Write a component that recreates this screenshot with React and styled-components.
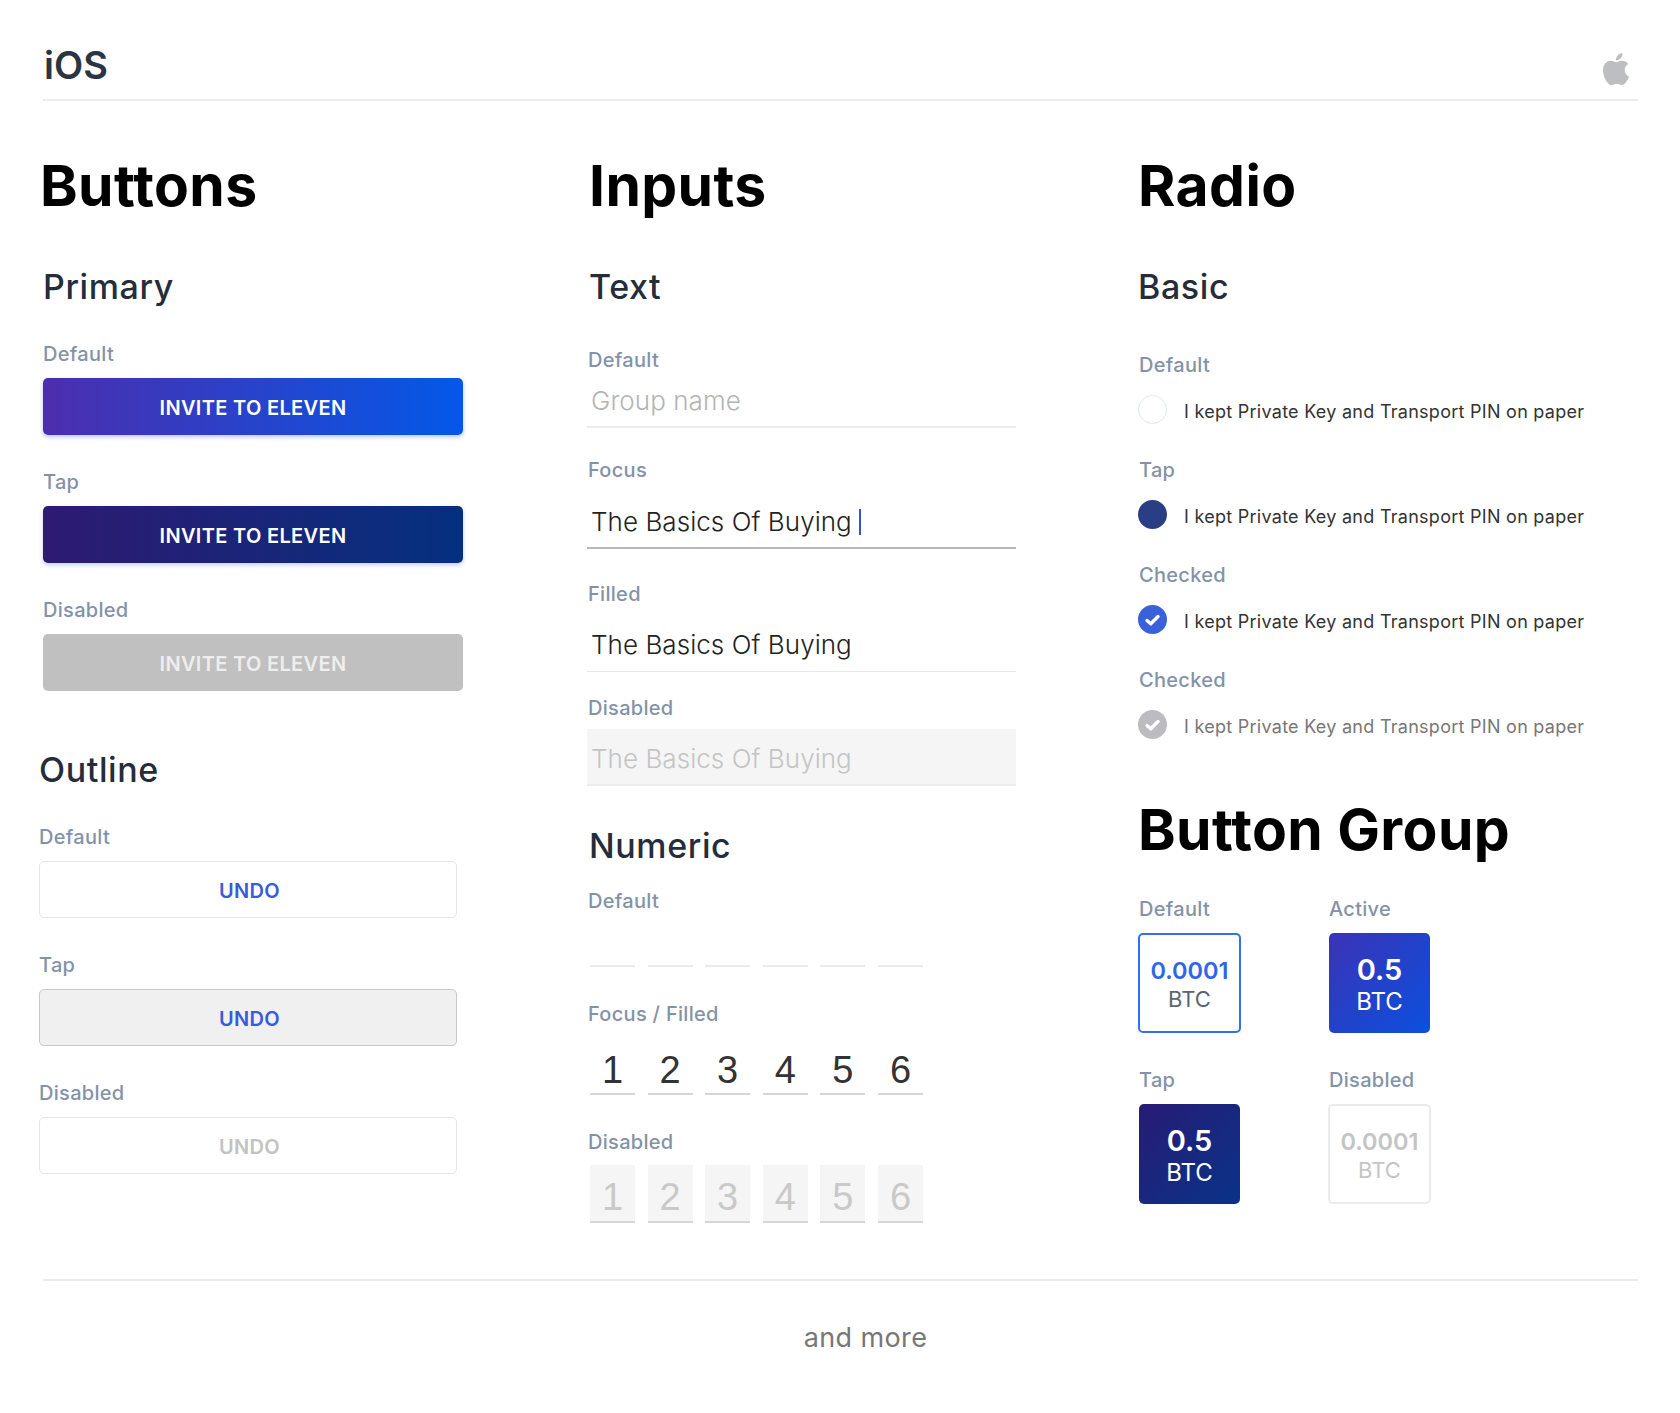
import React from "react";
import styled, { createGlobalStyle } from "styled-components";
import { SiApple } from "react-icons/si";

const GlobalStyle = createGlobalStyle`
  * { box-sizing: border-box; }
  body {
    margin: 0;
    background: #fff;
    font-family: Inter, "Noto Sans", sans-serif;
  }
`;

const Page = styled.div`
  width: 1680px;
  height: 1413px;
  overflow: hidden;
  background: #fff;
`;

const Header = styled.header`
  display: flex;
  justify-content: space-between;
  align-items: flex-start;
  height: 101px;
  margin: 0 42px 0 43px;
  border-bottom: 2px solid #ebebeb;
`;

const Platform = styled.div`
  margin: 42px 0 0 1px;
  font-size: 38px;
  line-height: 46px;
  font-weight: 600;
  color: #2b3442;
`;

const AppleMark = styled(SiApple)`
  width: 32px;
  height: 32px;
  margin: 53px 6px 0 0;
  color: #bcbec2;
`;

const Columns = styled.main`
  display: grid;
  grid-template-columns: 550px 549px 1fr;
  padding: 53px 0 0 39px;
  height: 1178px;
`;

const Column = styled.section`
  display: flex;
  flex-direction: column;
`;

const Title = styled.h1`
  margin: ${({ $top }) => $top || 0}px 0 0 ${({ $left }) => $left || 0}px;
  font-size: 57px;
  line-height: 64px;
  font-weight: 700;
  letter-spacing: 0.4px;
  color: #000;
`;

const Subtitle = styled.h2`
  margin: ${({ $top }) => $top}px 0 0 ${({ $left }) => $left || 0}px;
  font-size: 34px;
  line-height: 40px;
  font-weight: 500;
  letter-spacing: 0.6px;
  color: #252d3a;
`;

const Label = styled.div`
  margin: ${({ $top }) => $top}px 0 0 ${({ $left }) => $left || 0}px;
  font-size: 20px;
  line-height: 24px;
  font-weight: 500;
  letter-spacing: 0.3px;
  color: #8492a8;
`;

const variants = {
  primary: "background: linear-gradient(90deg, #4c2eae, #0358e8); color: #fff; box-shadow: 0 2px 4px rgba(50, 80, 220, 0.35);",
  primaryTap: "background: linear-gradient(90deg, #2f1a72, #04307f); color: #fff; box-shadow: 0 2px 4px rgba(50, 80, 220, 0.3);",
  primaryOff: "background: #c0c0c0; color: #eeeeee;",
  outline: "padding-left: 3px; background: #fff; border: 1.5px solid #e6e6e6; color: #3a5bd9;",
  outlineTap: "padding-left: 3px; background: #f0f0f0; border: 1.5px solid #c8c8c8; color: #3a5bd9;",
  outlineOff: "padding-left: 3px; background: #fff; border: 1.5px solid #e6e6e6; color: #c2c2c2;",
};

const Button = styled.div`
  display: flex;
  align-items: center;
  justify-content: center;
  width: ${({ $width }) => $width}px;
  height: 57px;
  margin: ${({ $top }) => $top || 12.5}px 0 0 ${({ $left }) => $left || 0}px;
  padding-top: 3px;
  border-radius: 5px;
  font-size: 20px;
  font-weight: 600;
  letter-spacing: 0.33px;
  ${({ $variant }) => variants[$variant]}
`;

const inputVariants = {
  empty: "margin-top: 13px; padding: 0 4px 9px; border-bottom: 2px solid #ececec; color: #b4b4b4;",
  focus: "margin-top: 23.5px; padding: 0 4px 9.5px; border-bottom: 2px solid #b8b8b8; color: #222;",
  filled: "margin-top: 22.5px; padding: 0 4px 10.5px; border-bottom: 1px solid #e4e8ea; color: #222;",
  disabled: "margin-top: 9px; padding: 13.5px 4px 9px; border-bottom: 2px solid #ececec; background: #f5f5f5; color: #c4c4c4;",
};

const Input = styled.div`
  display: flex;
  align-items: center;
  width: 429px;
  margin-left: -2px;
  font-size: 26px;
  line-height: 32px;
  font-weight: 300;
  letter-spacing: 0.05px;
  ${({ $variant }) => inputVariants[$variant]}
`;

const Caret = styled.span`
  width: 2px;
  height: 26px;
  margin-left: 7px;
  background: #2f55d8;
`;

const Digits = styled.div`
  display: grid;
  grid-template-columns: repeat(6, 45px);
  column-gap: 12.6px;
  margin: ${({ $top }) => $top}px 0 0 1px;
`;

const Digit = styled.div`
  display: flex;
  align-items: flex-end;
  justify-content: center;
  height: ${({ $height }) => $height}px;
  padding-bottom: ${({ $off }) => ($off ? 2 : 1)}px;
  border-bottom: 2px solid ${({ $line }) => $line};
  background: ${({ $off }) => ($off ? "#f5f5f5" : "transparent")};
  color: ${({ $off }) => ($off ? "#c9c9c9" : "#333")};
  font-family: "Liberation Sans", Arial, sans-serif;
  font-size: 38px;
  line-height: 44px;
`;

const RadioRow = styled.div`
  display: flex;
  gap: 17px;
  align-items: center;
  margin-top: 18px;
`;

const radioKinds = {
  empty: "background: #fff; border: 1.5px solid #e3e7ea;",
  tap: "background: #2a3e86;",
  checked: "background: #3a61d9;",
  off: "background: #bcbcc0;",
};

const RadioDot = styled.span`
  display: flex;
  align-items: center;
  justify-content: center;
  flex: none;
  width: 29px;
  height: 29px;
  border-radius: 50%;
  ${({ $kind }) => radioKinds[$kind]}
`;

const RadioText = styled.span`
  padding-top: 5px;
  font-size: 18px;
  line-height: 24px;
  letter-spacing: 0.27px;
  color: ${({ $off }) => ($off ? "#777" : "#333")};
`;

const GroupGrid = styled.div`
  display: grid;
  grid-template-columns: 190px 190px;
  margin-left: 1px;
`;

const groupKinds = {
  outline: "margin: 12px -1px 0; background: #fff; border: 2px solid #3170ee; color: #5a6472;",
  active: "margin-top: 12px; background: linear-gradient(135deg, #3b33b6, #0b50dd); color: #fff;",
  tap: "margin-top: 12px; background: linear-gradient(135deg, #281b74, #0a3389); color: #fff;",
  off: "margin: 12px -1px 0; background: #fff; border: 2px solid #ebebeb; color: #c4c4c4;",
};

const GroupBox = styled.div`
  display: flex;
  flex-direction: column;
  align-items: center;
  justify-content: center;
  width: ${({ $kind }) => ($kind === "outline" || $kind === "off" ? 103 : 101)}px;
  height: 100px;
  padding-top: ${({ $kind }) => ($kind === "outline" || $kind === "off" ? 3 : 4)}px;
  border-radius: 5px;
  ${({ $kind }) => groupKinds[$kind]}
`;

const Amount = styled.div`
  font-size: ${({ $big }) => ($big ? 29 : 23.5)}px;
  line-height: 30px;
  font-weight: 600;
  color: ${({ $color }) => $color || "inherit"};
`;

const Unit = styled.div`
  margin-top: ${({ $big }) => ($big ? 3 : -1)}px;
  font-size: ${({ $big }) => ($big ? 24 : 22)}px;
  line-height: 28px;
`;

const Footer = styled.footer`
  display: flex;
  justify-content: center;
  margin: 0 42px 0 43px;
  padding: 39px 0 0 50px;
  border-top: 2px solid #ebebeb;
  font-size: 27px;
  line-height: 36px;
  letter-spacing: 0.4px;
  color: #777;
`;

const Check = () => (
  <svg width="17" height="14" viewBox="0 0 17 14" fill="none">
    <path d="M3 7.5 L6.8 10.8 L14 3.5" stroke="#fff" strokeWidth="3.4" strokeLinecap="round" strokeLinejoin="round" />
  </svg>
);

const radios = [
  { label: "Default", kind: "empty" },
  { label: "Tap", kind: "tap" },
  { label: "Checked", kind: "checked", check: true },
  { label: "Checked", kind: "off", check: true, off: true },
];

const numbers = ["1", "2", "3", "4", "5", "6"];

const App = () => {
  return (
    <Page>
      <GlobalStyle />
      <Header>
        <Platform>iOS</Platform>
        <AppleMark />
      </Header>
      <Columns>
        <Column>
          <Title $left={1}>Buttons</Title>
          <Subtitle $top={49} $left={4}>Primary</Subtitle>
          <Label $top={35} $left={4}>Default</Label>
          <Button $width={420} $left={4} $top={11.5} $variant="primary">INVITE TO ELEVEN</Button>
          <Label $top={35.5} $left={4}>Tap</Label>
          <Button $width={420} $left={4} $top={11.5} $variant="primaryTap">INVITE TO ELEVEN</Button>
          <Label $top={35.5} $left={4}>Disabled</Label>
          <Button $width={420} $left={4} $top={11.5} $variant="primaryOff">INVITE TO ELEVEN</Button>
          <Subtitle $top={59}>Outline</Subtitle>
          <Label $top={35}>Default</Label>
          <Button $width={418} $variant="outline">UNDO</Button>
          <Label $top={34.5}>Tap</Label>
          <Button $width={418} $variant="outlineTap">UNDO</Button>
          <Label $top={34.5}>Disabled</Label>
          <Button $width={418} $variant="outlineOff">UNDO</Button>
        </Column>

        <Column>
          <Title>Inputs</Title>
          <Subtitle $top={49}>Text</Subtitle>
          <Label $top={41} $left={-1}>Default</Label>
          <Input $variant="empty">Group name</Input>
          <Label $top={30} $left={-1}>Focus</Label>
          <Input $variant="focus">The Basics Of Buying<Caret /></Input>
          <Label $top={33} $left={-1}>Filled</Label>
          <Input $variant="filled">The Basics Of Buying</Input>
          <Label $top={24} $left={-1}>Disabled</Label>
          <Input $variant="disabled">The Basics Of Buying</Input>
          <Subtitle $top={40}>Numeric</Subtitle>
          <Label $top={23} $left={-1}>Default</Label>
          <Digits $top={9}>
            {numbers.map((n) => (
              <Digit key={n} $height={45} $line="#e8ecee" />
            ))}
          </Digits>
          <Label $top={35} $left={-1}>Focus / Filled</Label>
          <Digits $top={9}>
            {numbers.map((n) => (
              <Digit key={n} $height={60} $line="#d6d6d6">{n}</Digit>
            ))}
          </Digits>
          <Label $top={35} $left={-1}>Disabled</Label>
          <Digits $top={11}>
            {numbers.map((n) => (
              <Digit key={n} $height={58} $line="#d6d6d6" $off>{n}</Digit>
            ))}
          </Digits>
        </Column>

        <Column>
          <Title>Radio</Title>
          <Subtitle $top={49}>Basic</Subtitle>
          {radios.map((radio, i) => (
            <React.Fragment key={radio.kind}>
              <Label $top={i === 0 ? 46 : 34} $left={1}>{radio.label}</Label>
              <RadioRow>
                <RadioDot $kind={radio.kind}>{radio.check && <Check />}</RadioDot>
                <RadioText $off={radio.off}>I kept Private Key and Transport PIN on paper</RadioText>
              </RadioRow>
            </React.Fragment>
          ))}
          <Title $top={59}>Button Group</Title>
          <GroupGrid>
            <div>
              <Label $top={35}>Default</Label>
              <GroupBox $kind="outline">
                <Amount $color="#2f66e8">0.0001</Amount>
                <Unit>BTC</Unit>
              </GroupBox>
            </div>
            <div>
              <Label $top={35}>Active</Label>
              <GroupBox $kind="active">
                <Amount $big>0.5</Amount>
                <Unit $big>BTC</Unit>
              </GroupBox>
            </div>
            <div>
              <Label $top={35}>Tap</Label>
              <GroupBox $kind="tap">
                <Amount $big>0.5</Amount>
                <Unit $big>BTC</Unit>
              </GroupBox>
            </div>
            <div>
              <Label $top={35}>Disabled</Label>
              <GroupBox $kind="off">
                <Amount>0.0001</Amount>
                <Unit>BTC</Unit>
              </GroupBox>
            </div>
          </GroupGrid>
        </Column>
      </Columns>
      <Footer>and more</Footer>
    </Page>
  );
};

export default App;
